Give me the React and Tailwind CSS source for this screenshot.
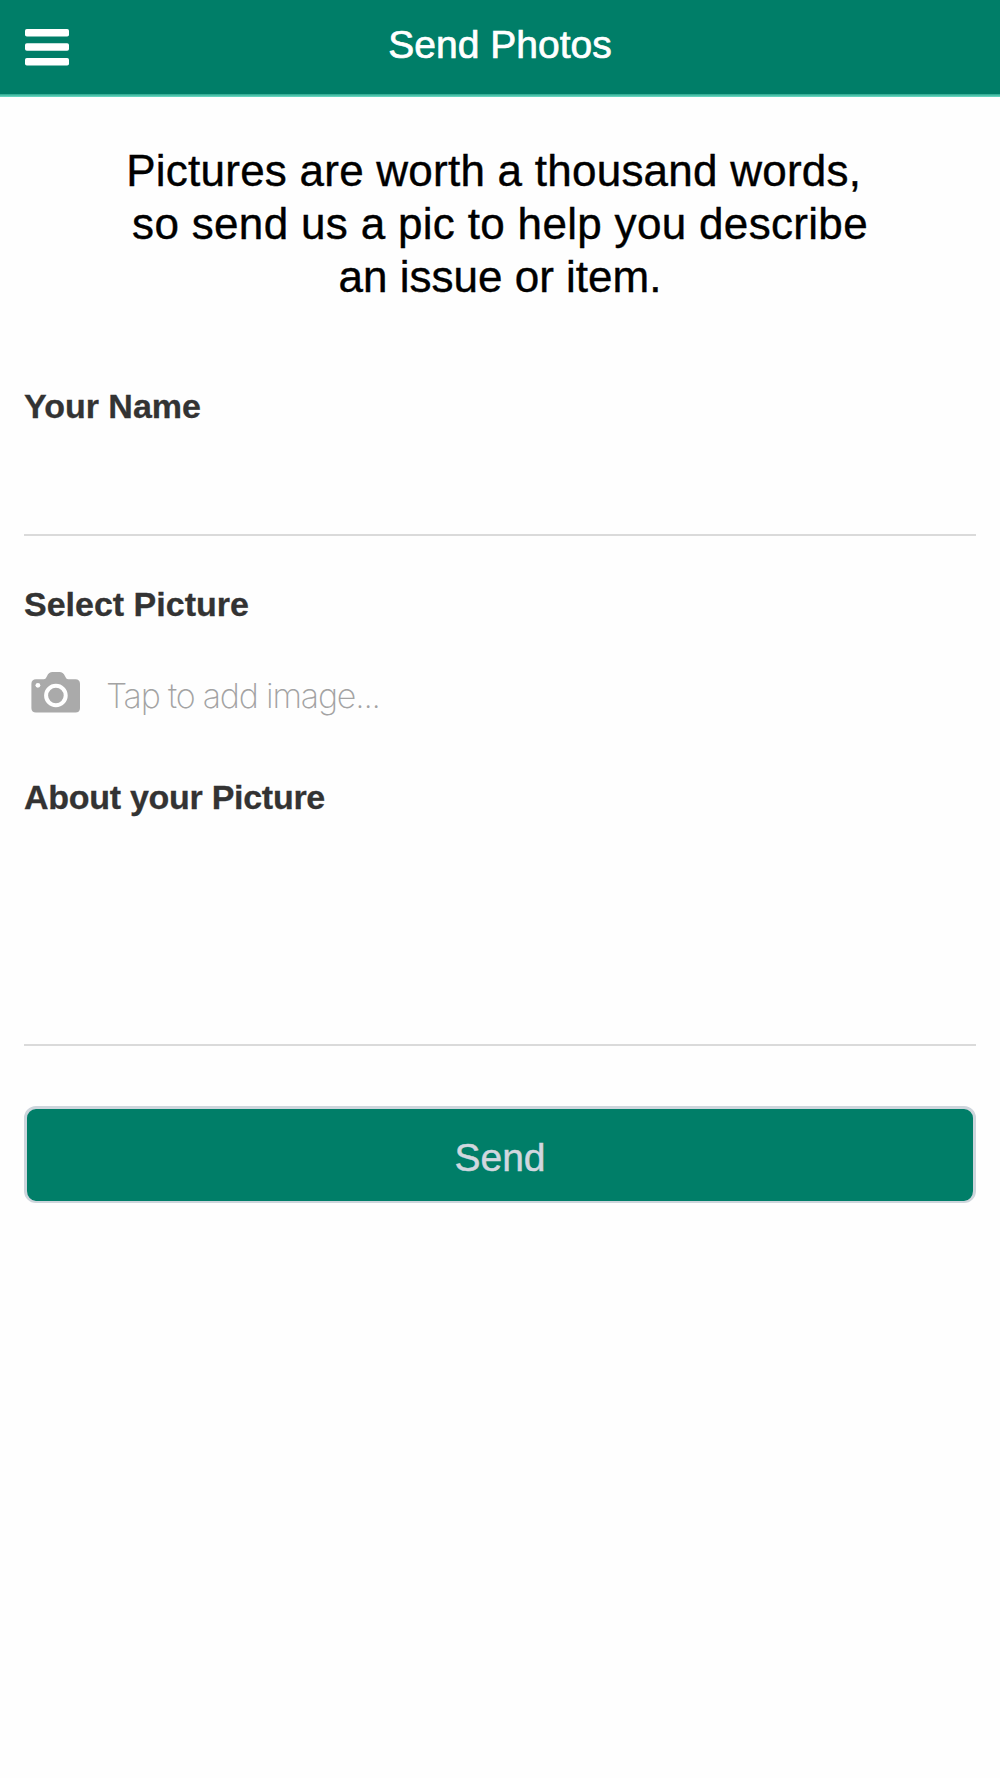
function MenuIcon() {
  return (
    <svg width="44" height="37" viewBox="0 0 44 37" fill="white" aria-hidden="true">
      <rect x="0" y="0" width="44" height="7.6" rx="1.8" />
      <rect x="0" y="14.2" width="44" height="7.6" rx="1.8" />
      <rect x="0" y="28.9" width="44" height="7.6" rx="1.8" />
    </svg>
  );
}

function CameraIcon() {
  return (
    <svg width="50" height="42" viewBox="0 0 50 42" aria-hidden="true">
      <path
        fill="#aaaaaa"
        d="M5 7.2H12.6C14.6 7.2 15 6 15.8 4.4C17.4 1.2 19 0 21.5 0H28.4C31 0 32.6 1.2 34.2 4.4C35 6 35.4 7.2 37.4 7.2H44.5C47.3 7.2 49 8.9 49 11.7V36.2C49 39 47.3 40.6 44.5 40.6H5C2.2 40.6 0.4 39 0.4 36.2V11.7C0.4 8.9 2.2 7.2 5 7.2Z"
      />
      <circle cx="24.9" cy="23.5" r="9.8" fill="none" stroke="white" strokeWidth="4" />
      <circle cx="6.9" cy="13.3" r="2.4" fill="white" />
    </svg>
  );
}

function Label({ children, className }) {
  return (
    <label className={"block h-10 whitespace-nowrap text-[34px] leading-10 font-bold text-[#333333] [-webkit-text-stroke:0.3px_#333333] " + className}>
      {children}
    </label>
  );
}

export default function App() {
  return (
    <div className="h-[1778px] w-[1000px] overflow-hidden bg-[#fefefe] font-['Liberation_Sans',Arial,sans-serif]">
      <header className="grid h-[94px] grid-cols-[1fr_auto_1fr] bg-[#007e68]">
        <button className="flex items-start pt-[29px] pl-[25px]" aria-label="Menu">
          <MenuIcon />
        </button>
        <h1 className="text-[39px] leading-[89px] text-white [-webkit-text-stroke:0.7px_white]">Send Photos</h1>
      </header>
      <div className="h-[3px] bg-linear-to-b from-[#27a78e] to-[#6ddcc6]" />

      <p className="pt-[47px] text-center text-[44px] leading-[53px] whitespace-pre text-black [-webkit-text-stroke:0.4px_black]">
        <span className="block tracking-[0.24px]">{"Pictures are worth a thousand words,\u00a0"}</span>
        <span className="block tracking-[0.32px]">so send us a pic to help you describe</span>
        <span className="block">an issue or item.</span>
      </p>

      <form className="flex flex-col px-6 pt-[83px]">
        <Label className="tracking-normal">Your Name</Label>
        <div className="h-[110px] border-b-2 border-[#dadada]" />

        <Label className="mt-12 tracking-normal">Select Picture</Label>
        <div className="mt-12 flex h-[42px] items-start pl-[7px]">
          <CameraIcon />
          <span className="ml-[25px] font-['Inter'] text-[34px] leading-[48px] font-extralight tracking-[-1.2px] whitespace-nowrap text-[#a3a3a3]">
            Tap to add image...
          </span>
        </div>

        <Label className="mt-[63px] tracking-[-0.28px]">About your Picture</Label>
        <div className="h-[229px] border-b-2 border-[#dadada]" />

        <button
          type="button"
          className="mt-[60px] h-[97px] rounded-[12px] border-[3px] border-b-2 border-[#cdd5dc] bg-[#007e68] pt-[6px] text-[39px] text-[#d1d7df] [-webkit-text-stroke:0.5px_#d1d7df]"
        >
          Send
        </button>
      </form>
    </div>
  );
}
